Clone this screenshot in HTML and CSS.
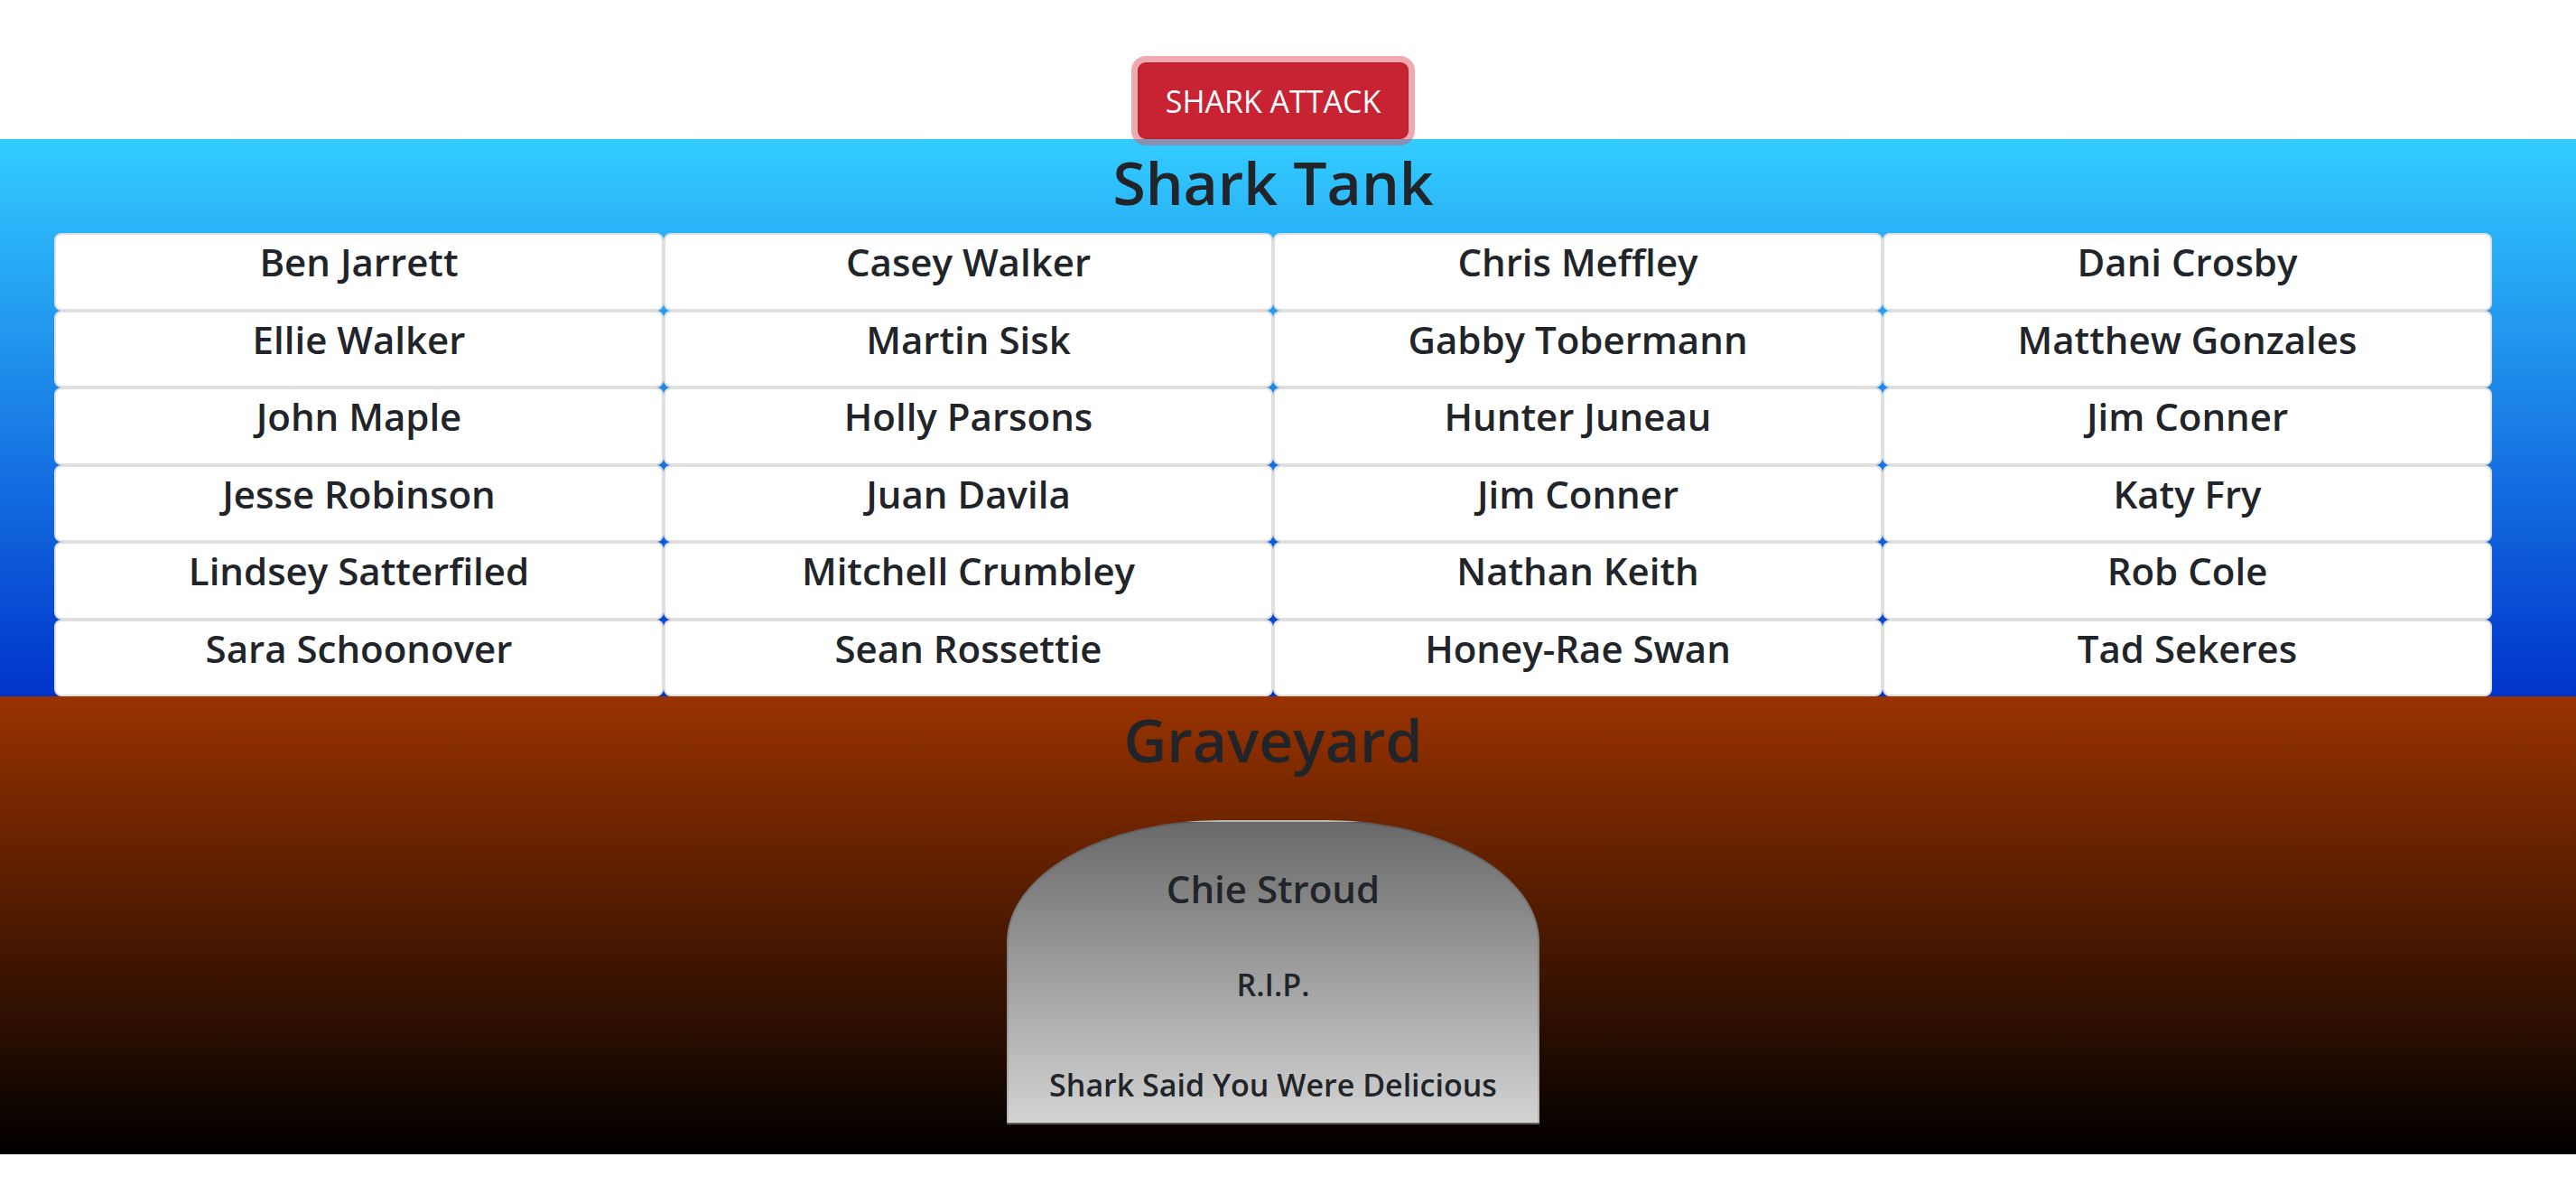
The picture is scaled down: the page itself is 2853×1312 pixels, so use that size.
FILE: index.html
```html
<!DOCTYPE html>
<html lang="en">
<head>
  <meta charset="utf-8">
  <title>Shark Tank</title>
  <link rel="stylesheet" href="styles.css">
</head>
<body>
  <header class="band controls">
    <button type="button" class="attack">SHARK ATTACK</button>
  </header>
  <main>
    <section class="band tank">
      <h1 class="title">Shark Tank</h1>
      <ul class="swimmers">
        <li class="card">Ben Jarrett</li>
        <li class="card">Casey Walker</li>
        <li class="card">Chris Meffley</li>
        <li class="card">Dani Crosby</li>
        <li class="card">Ellie Walker</li>
        <li class="card">Martin Sisk</li>
        <li class="card">Gabby Tobermann</li>
        <li class="card">Matthew Gonzales</li>
        <li class="card">John Maple</li>
        <li class="card">Holly Parsons</li>
        <li class="card">Hunter Juneau</li>
        <li class="card">Jim Conner</li>
        <li class="card">Jesse Robinson</li>
        <li class="card">Juan Davila</li>
        <li class="card">Jim Conner</li>
        <li class="card">Katy Fry</li>
        <li class="card">Lindsey Satterfiled</li>
        <li class="card">Mitchell Crumbley</li>
        <li class="card">Nathan Keith</li>
        <li class="card">Rob Cole</li>
        <li class="card">Sara Schoonover</li>
        <li class="card">Sean Rossettie</li>
        <li class="card">Honey-Rae Swan</li>
        <li class="card">Tad Sekeres</li>
      </ul>
    </section>
    <section class="band graveyard">
      <h1 class="title">Graveyard</h1>
      <article class="tombstone">
        <h2 class="name">Chie Stroud</h2>
        <p class="epitaph">R.I.P.</p>
        <p class="epitaph">Shark Said You Were Delicious</p>
      </article>
    </section>
  </main>
</body>
</html>
```
FILE: styles.css
```css
* {
  box-sizing: border-box;
}

body {
  margin: 0;
  background: #fff;
  color: #212529;
  font-family: "Segoe UI", "Open Sans", "Noto Sans", sans-serif;
}

.band {
  display: flex;
  flex-direction: column;
  align-items: center;
  padding: 0 93px 0 60px;
}

.controls {
  padding-top: 69px;
}

.attack {
  position: relative;
  padding: 15px 29px 13px;
  border: 2px solid #bd2130;
  border-radius: 9px;
  background: #c82333;
  box-shadow: 0 0 0 7px rgba(225, 83, 97, 0.5);
  color: #fff;
  font: inherit;
  font-size: 34px;
  line-height: 53px;
}

.tank {
  background: linear-gradient(#33ccff, #0033cc);
}

.title {
  margin: 0;
  font-size: 66px;
  font-weight: 600;
  line-height: 94px;
}

.swimmers {
  display: grid;
  grid-template-columns: repeat(4, 1fr);
  grid-template-rows: repeat(3, 86px 85px);
  width: 100%;
  margin: 10px 0 0;
  padding: 0;
  list-style: none;
}

.card {
  border: 2px solid rgba(0, 0, 0, 0.125);
  border-radius: 8px;
  background: #fff;
  font-size: 42px;
  font-weight: 600;
  line-height: 60px;
  text-align: center;
}

.graveyard {
  padding-bottom: 33px;
  background: linear-gradient(#993300, #000);
}

.tombstone {
  margin-top: 43px;
  padding: 44px 45px 15px;
  border: 2px solid rgba(0, 0, 0, 0.125);
  border-radius: 40% 40% 0 0;
  background: linear-gradient(#696969, #d3d3d3);
  text-align: center;
}

.name {
  margin: 0 0 49px;
  font-size: 42px;
  font-weight: 600;
  line-height: 60px;
}

.epitaph {
  margin: 0;
  font-size: 34px;
  font-weight: 600;
  line-height: 54px;
}

.epitaph + .epitaph {
  margin-top: 57px;
}
```
